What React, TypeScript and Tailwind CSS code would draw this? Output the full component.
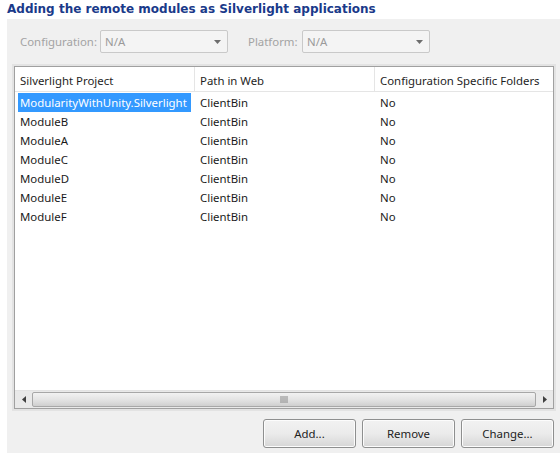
const rows = [
  { name: 'ModularityWithUnity.Silverlight', path: 'ClientBin', folders: 'No' },
  { name: 'ModuleB', path: 'ClientBin', folders: 'No' },
  { name: 'ModuleA', path: 'ClientBin', folders: 'No' },
  { name: 'ModuleC', path: 'ClientBin', folders: 'No' },
  { name: 'ModuleD', path: 'ClientBin', folders: 'No' },
  { name: 'ModuleE', path: 'ClientBin', folders: 'No' },
  { name: 'ModuleF', path: 'ClientBin', folders: 'No' },
];

function Combo({ value }: { value: string }) {
  return (
    <div className="w-[128px] h-[23px] flex items-center justify-between pl-[4px] pr-[6px] bg-[#f4f4f4] border border-[#c9c9c9] rounded-[2px] text-[#9a9a9a]">
      <span>{value}</span>
      <svg width="7" height="4" viewBox="0 0 7 4"><path d="M0 0h7L3.5 4z" fill="#6d6d6d" /></svg>
    </div>
  );
}

function Button({ label }: { label: string }) {
  return (
    <button className="w-[93px] h-[29px] rounded-[3px] border border-[#8e8f8f] bg-gradient-to-b from-[#f2f2f2] via-[#ebebeb] to-[#d6d6d6] text-[#222] shadow-[inset_0_0_0_1px_#fcfcfc]">
      {label}
    </button>
  );
}

export default function App() {
  return (
    <div className="w-[560px] h-[456px] bg-white overflow-hidden text-[11.4px] text-[#1a1a1a] font-['Noto_Sans','Open_Sans',sans-serif]">
      {/* Title */}
      <div className="h-[19px] pl-[7px] pt-[1px] font-['DejaVu_Sans',sans-serif] font-bold text-[12px] leading-[16px] text-[#1a3a8a]">
        Adding the remote modules as Silverlight applications
      </div>

      <div className="ml-[7px] h-[434px] bg-[#f0f0f0] flex flex-col">
        {/* Config row */}
        <div className="flex items-center mt-[11px] h-[23px]">
          <span className="ml-[13px] w-[80px] text-[#a3a3a3]">Configuration:</span>
          <Combo value="N/A" />
          <span className="ml-[20px] w-[54px] text-[#a3a3a3]">Platform:</span>
          <Combo value="N/A" />
        </div>

        {/* List */}
        <div className="mt-[13px] ml-[7px] w-[540px] h-[343px] border border-[#a0a0a0] shadow-[0_0_0_2px_#e3e3e3] bg-white flex flex-col">
          <div className="flex h-[25px] border-b border-[#e5e5e5] text-[#1e1e1e]">
            <div className="w-[180px] pl-[5px] pt-[5px] border-r border-[#e5e5e5]">Silverlight Project</div>
            <div className="w-[180px] pl-[5px] pt-[5px] border-r border-[#e5e5e5]">Path in Web</div>
            <div className="flex-1 pl-[5px] pt-[5px]">Configuration Specific Folders</div>
          </div>
          <div className="flex-1 pt-[1px]">
            {rows.map((r, i) => (
              <div key={r.name} className="flex h-[19px] items-center">
                <div className="w-[180px] pl-[3px]">
                  <span className={`inline-block px-[2px] h-[19px] leading-[19px] ${i === 0 ? 'bg-[#3399ff] text-white pr-[4px]' : ''}`}>
                    {r.name}
                  </span>
                </div>
                <div className="w-[180px] pl-[5px]">{r.path}</div>
                <div className="flex-1 pl-[5px]">{r.folders}</div>
              </div>
            ))}
          </div>
          {/* Horizontal scrollbar */}
          <div className="h-[18px] flex items-center bg-[#e9e9e9] border-t border-[#e3e3e3]">
            <div className="w-[17px] h-full flex items-center justify-center">
              <svg width="4" height="7" viewBox="0 0 4 7"><path d="M4 0v7L0 3.5z" fill="#404040" /></svg>
            </div>
            <div className="flex-1 h-[15px] rounded-[2px] border border-[#a7a7a7] bg-gradient-to-b from-[#f2f2f2] via-[#e4e4e4] to-[#cfcfcf] flex items-center justify-center">
              <svg width="8" height="7" viewBox="0 0 8 7">
                <path d="M1 0v7M3 0v7M5 0v7M7 0v7" stroke="#8a8a8a" strokeWidth="1" />
              </svg>
            </div>
            <div className="w-[17px] h-full flex items-center justify-center">
              <svg width="4" height="7" viewBox="0 0 4 7"><path d="M0 0v7L4 3.5z" fill="#404040" /></svg>
            </div>
          </div>
        </div>

        {/* Buttons */}
        <div className="flex justify-end gap-[6px] mt-[10px] pr-[6px]">
          <Button label="Add..." />
          <Button label="Remove" />
          <Button label="Change..." />
        </div>
      </div>
    </div>
  );
}
